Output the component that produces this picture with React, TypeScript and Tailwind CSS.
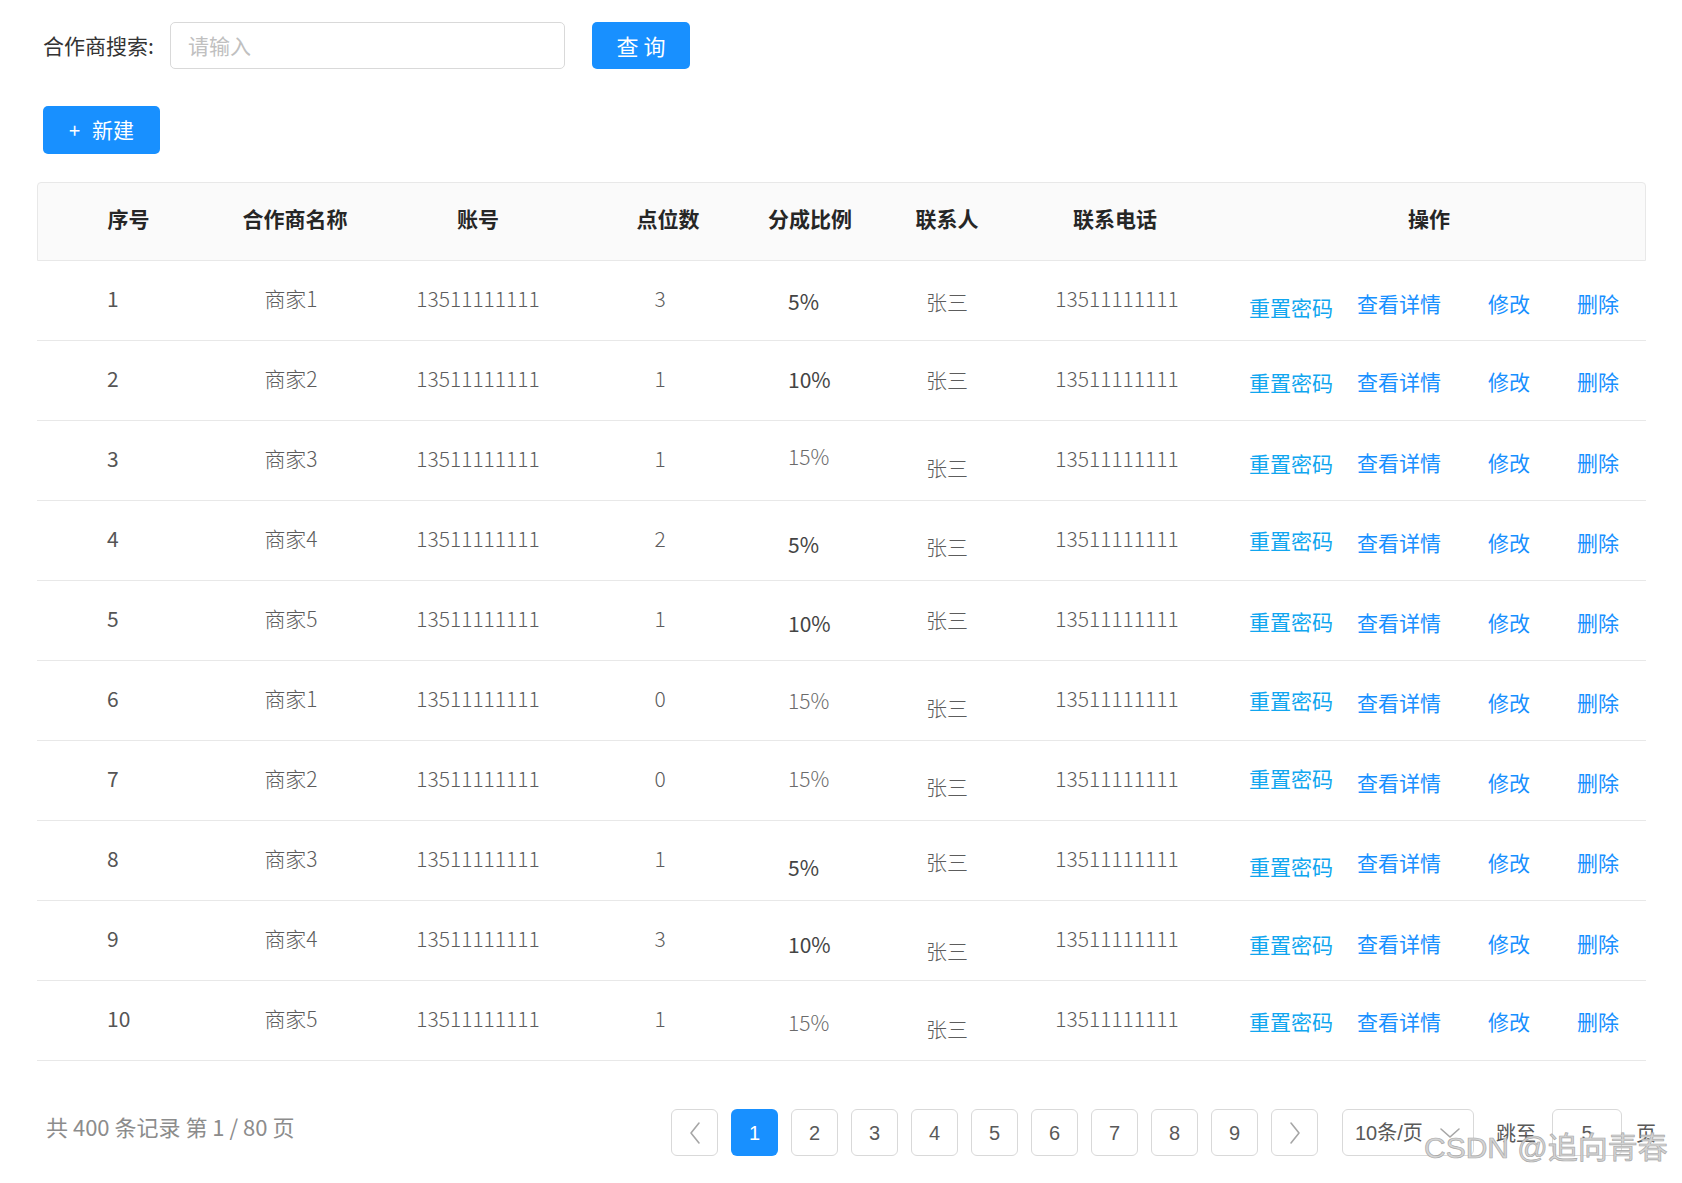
import React from "react";

const FONT = { fontFamily: '"Noto Sans CJK SC", "Noto Sans", sans-serif' };
const ARIAL = { fontFamily: '"Liberation Sans", "Noto Sans CJK SC", sans-serif' };

type Row = {
  no: string;
  name: string;
  pts: string;
  pct: string;
  pctLight: boolean;
  base: string;
  pctY: string;
  zsY: string;
  resetY: string;
  linkY: string;
};

const rows: Row[] = [
  { no: "1", name: "商家1", pts: "3", pct: "5%", pctLight: false, base: "-translate-y-[2px]", pctY: "translate-y-[1px]", zsY: "translate-y-[1px]", resetY: "translate-y-[7px]", linkY: "translate-y-[3px]" },
  { no: "2", name: "商家2", pts: "1", pct: "10%", pctLight: false, base: "-translate-y-[2px]", pctY: "-translate-y-[1px]", zsY: "-translate-y-[1px]", resetY: "translate-y-[2px]", linkY: "translate-y-[1px]" },
  { no: "3", name: "商家3", pts: "1", pct: "15%", pctLight: true, base: "-translate-y-[2px]", pctY: "-translate-y-[4px]", zsY: "translate-y-[7px]", resetY: "translate-y-[3px]", linkY: "translate-y-[2px]" },
  { no: "4", name: "商家4", pts: "2", pct: "5%", pctLight: false, base: "-translate-y-[2px]", pctY: "translate-y-[4px]", zsY: "translate-y-[6px]", resetY: "translate-y-[0px]", linkY: "translate-y-[2px]" },
  { no: "5", name: "商家5", pts: "1", pct: "10%", pctLight: false, base: "-translate-y-[2px]", pctY: "translate-y-[3px]", zsY: "-translate-y-[1px]", resetY: "translate-y-[1px]", linkY: "translate-y-[2px]" },
  { no: "6", name: "商家1", pts: "0", pct: "15%", pctLight: true, base: "-translate-y-[2px]", pctY: "translate-y-[0px]", zsY: "translate-y-[7px]", resetY: "translate-y-[0px]", linkY: "translate-y-[2px]" },
  { no: "7", name: "商家2", pts: "0", pct: "15%", pctLight: true, base: "-translate-y-[2px]", pctY: "-translate-y-[2px]", zsY: "translate-y-[6px]", resetY: "-translate-y-[2px]", linkY: "translate-y-[2px]" },
  { no: "8", name: "商家3", pts: "1", pct: "5%", pctLight: false, base: "-translate-y-[2px]", pctY: "translate-y-[7px]", zsY: "translate-y-[1px]", resetY: "translate-y-[6px]", linkY: "translate-y-[2px]" },
  { no: "9", name: "商家4", pts: "3", pct: "10%", pctLight: false, base: "-translate-y-[2px]", pctY: "translate-y-[4px]", zsY: "translate-y-[10px]", resetY: "translate-y-[4px]", linkY: "translate-y-[3px]" },
  { no: "10", name: "商家5", pts: "1", pct: "15%", pctLight: true, base: "-translate-y-[2px]", pctY: "translate-y-[2px]", zsY: "translate-y-[8px]", resetY: "translate-y-[1px]", linkY: "translate-y-[1px]" },
];

function ChevronLeft() {
  return (
    <svg width="14" height="24" viewBox="0 0 14 24" fill="none">
      <path d="M11 2 L3 12 L11 22" stroke="#a6a6a6" strokeWidth="1.6" strokeLinecap="round" strokeLinejoin="round" />
    </svg>
  );
}
function ChevronRight() {
  return (
    <svg width="14" height="24" viewBox="0 0 14 24" fill="none">
      <path d="M3 2 L11 12 L3 22" stroke="#a6a6a6" strokeWidth="1.6" strokeLinecap="round" strokeLinejoin="round" />
    </svg>
  );
}
function ChevronDown() {
  return (
    <svg width="22" height="12" viewBox="0 0 22 12" fill="none">
      <path d="M2 2 L11 10 L20 2" stroke="#a6a6a6" strokeWidth="1.6" strokeLinecap="round" strokeLinejoin="round" />
    </svg>
  );
}

export default function App() {
  return (
    <div className="relative w-[1682px] h-[1183px] bg-white overflow-hidden pl-[37px] pr-[36px]" style={FONT}>
      {/* search bar */}
      <div className="flex items-center pt-[22px]">
        <div className="w-[133px] pl-[6px] text-[21px] text-[#333] whitespace-nowrap">合作商搜索:</div>
        <div className="w-[395px] h-[47px] border border-[#d9d9d9] rounded-[5px] flex items-center pl-[17px] text-[21px] text-[#c0c0c0]">
          请输入
        </div>
        <button className="ml-[27px] w-[98px] h-[47px] rounded-[5px] bg-[#1890ff] text-white text-[22px] flex items-center justify-center whitespace-pre">
          查 询
        </button>
      </div>

      {/* new button */}
      <div className="pt-[37px] pl-[6px]">
        <button className="w-[117px] h-[48px] rounded-[5px] bg-[#1890ff] text-white flex items-center justify-center">
          <span className="text-[20px] mr-[12px] leading-none">+</span>
          <span className="text-[21px]">新建</span>
        </button>
      </div>

      {/* table */}
      <div className="mt-[28px] w-[1609px]">
        <div className="flex h-[79px] bg-[#fafafa] border border-[#e8e8e8] rounded-t-[4px] text-[21px] font-bold text-[#262626] items-center whitespace-nowrap">
          <div className="w-[181px] flex justify-center -translate-y-[3px]">序号</div>
          <div className="w-[152px] flex justify-center -translate-y-[3px]">合作商名称</div>
          <div className="w-[214px] flex justify-center -translate-y-[3px]">账号</div>
          <div className="w-[166px] flex justify-center -translate-y-[3px]">点位数</div>
          <div className="w-[118px] flex justify-center -translate-y-[3px]">分成比例</div>
          <div className="w-[156px] flex justify-center -translate-y-[3px]">联系人</div>
          <div className="w-[180px] flex justify-center -translate-y-[3px]">联系电话</div>
          <div className="w-[440px] flex justify-center pl-[8px] -translate-y-[3px]">操作</div>
        </div>
        {rows.map((r) => (
          <div key={r.no} className="flex h-[80px] border-b border-[#e8e8e8] items-center text-[21px] text-[#5c5c5c] font-light whitespace-nowrap">
            <div className={`w-[182px] flex justify-start pl-[70px] text-[#555] font-normal ${r.base}`}>{r.no}</div>
            <div className={`w-[152px] flex justify-center pr-[8px] ${r.base}`}>{r.name}</div>
            <div className={`w-[214px] flex justify-center ${r.base}`}>13511111111</div>
            <div className={`w-[166px] flex justify-center pr-[16px] ${r.base}`}>{r.pts}</div>
            <div className={`w-[118px] flex justify-start pl-[37px] ${r.pctY} ${r.pctLight ? "text-[#6b6b6b] font-light" : "text-[#444] font-normal"}`}>{r.pct}</div>
            <div className={`w-[156px] flex justify-center ${r.zsY}`}>张三</div>
            <div className={`w-[180px] flex justify-center pl-[4px] ${r.base}`}>13511111111</div>
            <div className="w-[441px] flex items-center pl-[44px] text-[21px] font-normal">
              <span className={`shrink-0 text-[#10a6ef] ${r.resetY}`}>重置密码</span>
              <span className={`shrink-0 ml-[24px] text-[#1890ff] ${r.linkY}`}>查看详情</span>
              <span className={`shrink-0 ml-[47px] text-[#1890ff] ${r.linkY}`}>修改</span>
              <span className={`shrink-0 ml-[47px] text-[#1890ff] ${r.linkY}`}>删除</span>
            </div>
          </div>
        ))}
      </div>

      {/* pagination */}
      <div className="flex items-center mt-[48px] h-[47px] whitespace-nowrap">
        <div className="w-[634px] shrink-0 pl-[9px] text-[22px] text-[#8c8c8c] -translate-y-[6px]">共 400 条记录 第 1 / 80 页</div>
        <div className="flex items-center gap-[13px] shrink-0" style={ARIAL}>
          <div className="w-[47px] h-[47px] rounded-[6px] border border-[#d9d9d9] flex items-center justify-center">
            <ChevronLeft />
          </div>
          <div className="w-[47px] h-[47px] rounded-[6px] bg-[#1890ff] text-white text-[20px] flex items-center justify-center">1</div>
          {["2", "3", "4", "5", "6", "7", "8", "9"].map((n) => (
            <div key={n} className="w-[47px] h-[47px] rounded-[6px] border border-[#d9d9d9] text-[#595959] text-[20px] flex items-center justify-center">
              {n}
            </div>
          ))}
          <div className="w-[47px] h-[47px] rounded-[6px] border border-[#d9d9d9] flex items-center justify-center">
            <ChevronRight />
          </div>
        </div>
        <div className="ml-[24px] shrink-0 w-[132px] h-[47px] rounded-[6px] border border-[#d9d9d9] flex items-center pl-[12px] pr-[12px] justify-between text-[20px] text-[#595959]" style={ARIAL}>
          <span>10条/页</span>
          <ChevronDown />
        </div>
        <div className="ml-[22px] shrink-0 text-[20px] text-[#595959]">跳至</div>
        <div className="ml-[16px] shrink-0 w-[70px] h-[47px] rounded-[6px] border border-[#d9d9d9] flex items-center justify-center text-[20px] text-[#595959]" style={ARIAL}>
          5
        </div>
        <div className="ml-[14px] shrink-0 text-[20px] text-[#595959]">页</div>
      </div>

      {/* watermark */}
      <div
        className="absolute left-[1424px] top-[1133px] text-[30px] leading-none text-[#d4d4d4] whitespace-nowrap [-webkit-text-stroke:0.7px_#a9a9a9]"
        style={ARIAL}
      >
        CSDN @追向青春
      </div>
    </div>
  );
}
